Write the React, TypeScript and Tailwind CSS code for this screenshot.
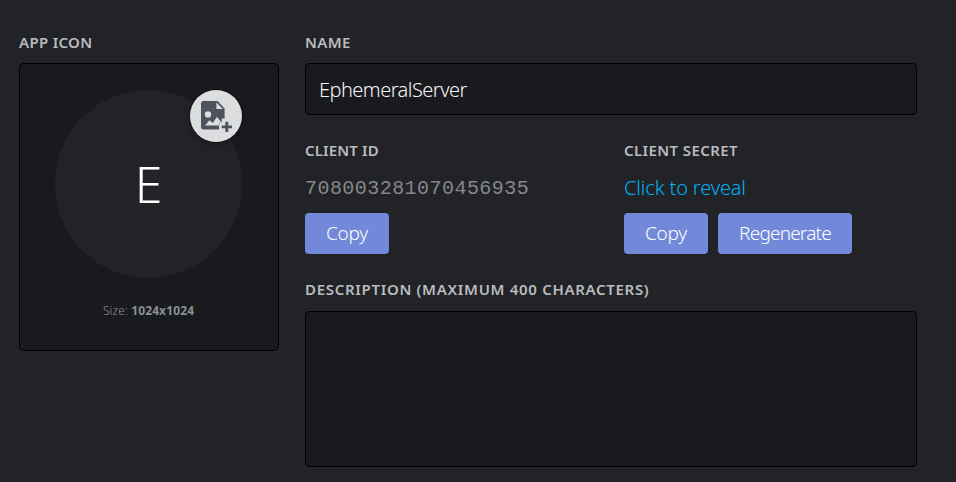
import type { ReactNode } from "react";

function Label({ children, className = "" }: { children: ReactNode; className?: string }) {
  return (
    <div className={`h-5 whitespace-nowrap text-[15px] font-semibold leading-5 text-[#b9bbbe] ${className}`}>
      {children}
    </div>
  );
}

function Button({ children, className }: { children: ReactNode; className: string }) {
  return (
    <button
      className={`flex h-[41px] items-center justify-center rounded-[4px] bg-[#7289da] text-[19px] leading-none text-white ${className}`}
    >
      {children}
    </button>
  );
}

function UploadIcon() {
  return (
    <svg width="32" height="32" viewBox="0 0 32 32" className="absolute left-[11px] top-[10px]">
      <path
        fill="#4f545c"
        fillRule="evenodd"
        d="M2.6 1H16.6L23.6 8.4V18.4H20.8V22.4H18V29.4H2.6A2.6 2.6 0 0 1 0 26.8V3.6A2.6 2.6 0 0 1 2.6 1ZM15.4 2.6V9H22ZM7 11.2A3.2 3.2 0 1 0 7 17.6A3.2 3.2 0 1 0 7 11.2ZM4 25.4H18.4V22.4H20.4L16 16.8L11.8 23L8.6 20.2Z"
      />
      <path fill="#4f545c" d="M24.3 21.8H27.3V25.4H31V28.2H27.3V32H24.3V28.2H20.6V25.4H24.3Z" />
    </svg>
  );
}

export default function App() {
  return (
    <main className="flex h-[482px] w-[956px] gap-[26px] overflow-hidden bg-[#222326] pl-[19px] pt-8 font-['Noto_Sans',sans-serif]">
      <section className="w-[260px] shrink-0">
        <Label className="tracking-[0.3px]">APP ICON</Label>
        <div className="mt-[11px] flex h-[288px] flex-col items-center rounded-[5px] border border-black bg-[#191a1d] pr-px pt-[26px]">
          <div className="relative flex h-[188px] w-[187px] items-center justify-center rounded-full bg-[#222326]">
            <span className="text-[50px] font-light leading-none text-white">E</span>
            <div className="absolute right-0 top-0 size-[52px] rounded-full bg-[#dcddde] shadow-[0_2px_6px_rgba(0,0,0,0.4)]">
              <UploadIcon />
            </div>
          </div>
          <p className="mt-[25px] whitespace-nowrap text-[12px] leading-4 tracking-[0.12px] text-[#8a8f98]">
            <span className="font-light">Size:</span> <b>1024x1024</b>
          </p>
        </div>
      </section>

      <section className="w-[612px] shrink-0">
        <Label className="tracking-[0.4px]">NAME</Label>
        <div className="mt-[11px] flex h-[52px] items-center rounded-[4px] border border-black bg-[#191a1d] px-[13px] pt-0.5 text-[20px] font-light tracking-[-0.54px] text-[#f6f6f7]">
          EphemeralServer
        </div>
        <div className="mt-[25px] flex">
          <div className="w-[319px]">
            <Label className="tracking-[0.15px]">CLIENT ID</Label>
            <div className="mt-[15px] h-[26px] pt-px font-['Liberation_Mono',monospace] text-[20px] leading-[26px] tracking-[0.45px] text-[#85878b]">
              708003281070456935
            </div>
            <Button className="mt-3 w-[84px] font-light tracking-[-0.2px]">Copy</Button>
          </div>
          <div>
            <Label className="tracking-[0.4px]">CLIENT SECRET</Label>
            <div className="mt-[15px] h-[26px] whitespace-nowrap text-[20px] font-light leading-[26px] tracking-[-0.15px] text-[#00b0f4]">
              Click to reveal
            </div>
            <div className="mt-3 flex gap-[10px]">
              <Button className="w-[84px] font-light tracking-[-0.2px]">Copy</Button>
              <Button className="w-[134px] font-light tracking-[-0.8px]">Regenerate</Button>
            </div>
          </div>
        </div>
        <Label className="mt-[25px] tracking-[0.69px]">DESCRIPTION (MAXIMUM 400 CHARACTERS)</Label>
        <div className="mt-3 h-[156px] rounded-[4px] border border-black bg-[#191a1d]" />
      </section>
    </main>
  );
}
